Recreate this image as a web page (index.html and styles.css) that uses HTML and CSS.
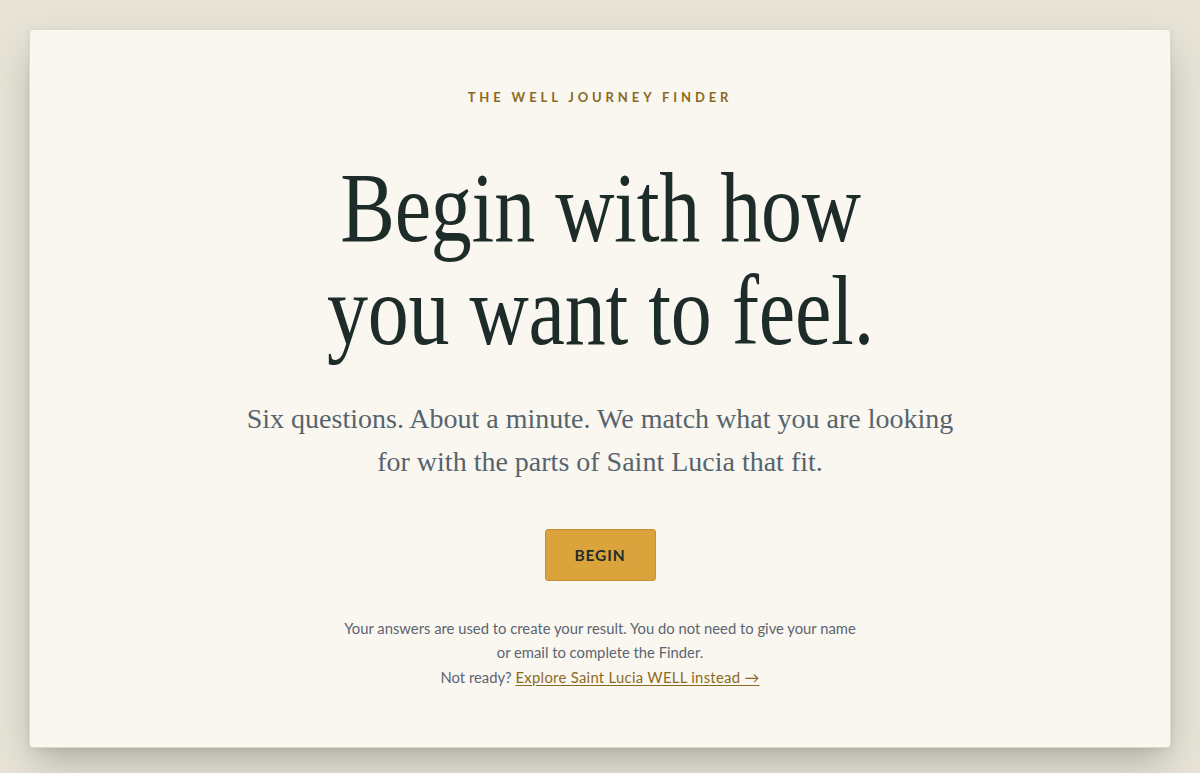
FILE: index.html
```html
<!DOCTYPE html>
<html lang="en">
<head>
<meta charset="utf-8">
<title>The Well Journey Finder</title>
<link rel="stylesheet" href="styles.css">
</head>
<body>
<main class="page">
  <section class="card">
    <p class="eyebrow">THE WELL JOURNEY FINDER</p>
    <h1 class="title">Begin with how<br>you want to feel.</h1>
    <p class="lead">Six questions. About a minute. We match what you are looking<br>for with the parts of Saint Lucia that fit.</p>
    <button class="btn" type="button">BEGIN</button>
    <p class="note">Your answers are used to create your result. You do not need to give your name<br>or email to complete the Finder.<br>Not ready? <a class="link" href="#">Explore Saint Lucia WELL instead →</a></p>
  </section>
</main>
</body>
</html>
```
FILE: styles.css
```css
html, body {
  margin: 0;
  padding: 0;
  height: 100%;
}
body {
  background: #e7e3d7;
  font-family: "Lato", "Liberation Sans", sans-serif;
}
.page {
  padding: 29px 29px 25px 29px;
  box-sizing: border-box;
  height: 100%;
  display: flex;
}
.card {
  flex: 1;
  background: #faf7f0;
  border: 1px solid #dcd8cc;
  border-radius: 4px;
  box-shadow: 0 18px 36px -6px rgba(60, 72, 60, 0.35), 0 2px 6px rgba(60, 72, 60, 0.08);
  display: flex;
  flex-direction: column;
  align-items: center;
  text-align: center;
  padding: 59px 40px 40px;
}
.eyebrow {
  margin: 0;
  font-size: 13px;
  line-height: 16px;
  font-weight: 700;
  letter-spacing: 3.9px;
  color: #8a6a22;
}
.title {
  margin: 51px 0 0;
  font-family: "Liberation Serif", serif;
  font-weight: 400;
  font-size: 100px;
  line-height: 103px;
  color: #1d2b29;
  transform: scaleX(0.82);
  letter-spacing: -0.3px;
}
.lead {
  margin: 35px 0 0;
  font-family: "Liberation Serif", serif;
  font-size: 28px;
  line-height: 43px;
  color: #56646e;
}
.btn {
  margin-top: 46px;
  width: 111px;
  height: 52px;
  background: #dba33c;
  border: 1px solid #c89232;
  border-radius: 3px;
  font-family: "Lato", "Liberation Sans", sans-serif;
  font-weight: 700;
  font-size: 15.5px;
  letter-spacing: 0.9px;
  color: #1f2d2a;
  padding: 0;
}
.note {
  margin: 35px 0 0;
  font-size: 14.8px;
  line-height: 24.3px;
  color: #5b6570;
}
.link {
  color: #8a6a22;
  text-decoration: underline;
  text-underline-offset: 2px;
  letter-spacing: 0.3px;
}
```
